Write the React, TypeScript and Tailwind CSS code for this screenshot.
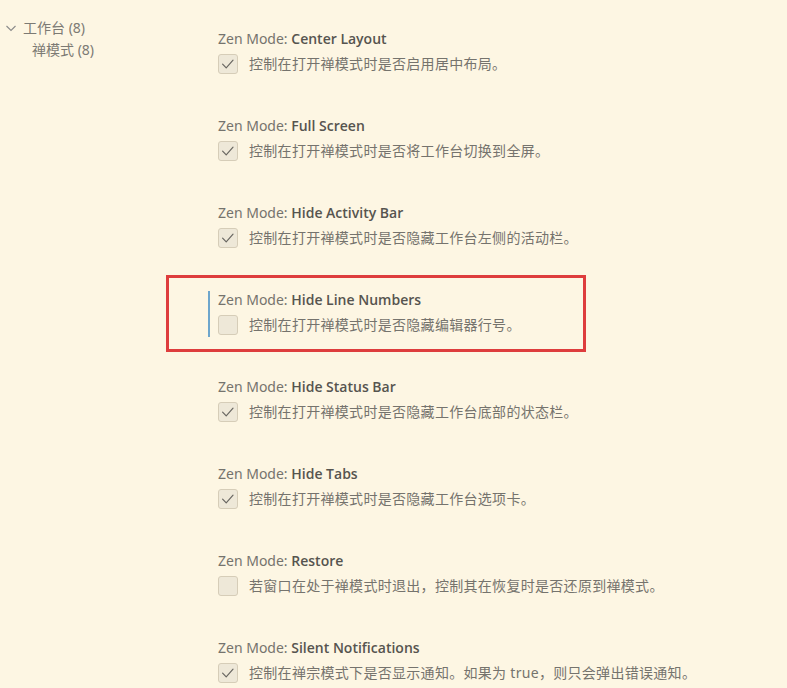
import React from "react";

type Item = { name: string; desc: string; checked: boolean; focused?: boolean };

const items: Item[] = [
  { name: "Center Layout", desc: "控制在打开禅模式时是否启用居中布局。", checked: true },
  { name: "Full Screen", desc: "控制在打开禅模式时是否将工作台切换到全屏。", checked: true },
  { name: "Hide Activity Bar", desc: "控制在打开禅模式时是否隐藏工作台左侧的活动栏。", checked: true },
  { name: "Hide Line Numbers", desc: "控制在打开禅模式时是否隐藏编辑器行号。", checked: false, focused: true },
  { name: "Hide Status Bar", desc: "控制在打开禅模式时是否隐藏工作台底部的状态栏。", checked: true },
  { name: "Hide Tabs", desc: "控制在打开禅模式时是否隐藏工作台选项卡。", checked: true },
  { name: "Restore", desc: "若窗口在处于禅模式时退出，控制其在恢复时是否还原到禅模式。", checked: false },
  { name: "Silent Notifications", desc: "控制在禅宗模式下是否显示通知。如果为 true，则只会弹出错误通知。", checked: true },
];

const font = { fontFamily: '"Noto Sans", "Noto Sans CJK SC", sans-serif' };

function Checkbox({ checked }: { checked: boolean }) {
  return (
    <div className="w-[20px] h-[20px] shrink-0 rounded-[3px] border border-[#d6cdb8] bg-[#eee8d8] flex items-center justify-center">
      {checked && (
        <svg width="20" height="20" viewBox="0 0 20 20" fill="none">
          <path d="M4 10.2 L8 14.4 L15.6 5.8" stroke="#676560" strokeWidth="1.3" strokeLinecap="round" strokeLinejoin="round" />
        </svg>
      )}
    </div>
  );
}

export default function App() {
  return (
    <div className="relative w-[787px] h-[688px] overflow-hidden bg-[#fdf6e3] flex" style={font}>
      <div className="w-[208px] shrink-0 pt-[17px] text-[14px] leading-[22px] text-[#7c7a74]">
        <div className="flex items-center">
          <svg width="12" height="12" viewBox="0 0 12 12" className="ml-[5px] mr-[6px]" fill="none">
            <path d="M1.5 4 L6 8.5 L10.5 4" stroke="#8a8a8a" strokeWidth="1.1" />
          </svg>
          <span>工作台 (8)</span>
        </div>
        <div className="pl-[32px]">禅模式 (8)</div>
      </div>
      <div className="flex-1 pt-[30px] flex flex-col gap-[41px]">
        {items.map((it) => (
          <div
            key={it.name}
            className={`border-l-2 pl-[8px] h-[46px] ${it.focused ? "border-[#6ea6cc]" : "border-transparent"}`}
          >
            <div className="text-[14px] leading-[18px] whitespace-nowrap">
              <span className="text-[#75736d]">Zen Mode: </span>
              <span
                className="text-[#56544f] font-semibold"
                style={{ fontFamily: '"Open Sans", "Noto Sans", sans-serif' }}
              >
                {it.name}
              </span>
            </div>
            <div className="mt-[5px] flex items-center gap-[11px]">
              <Checkbox checked={it.checked} />
              <span className="text-[14px] text-[#75736d] whitespace-nowrap tracking-[0.3px]">{it.desc}</span>
            </div>
          </div>
        ))}
      </div>
      <div className="absolute left-[166px] top-[275px] w-[420px] h-[77px] border-[3px] border-[#de3d3d]" />
    </div>
  );
}
